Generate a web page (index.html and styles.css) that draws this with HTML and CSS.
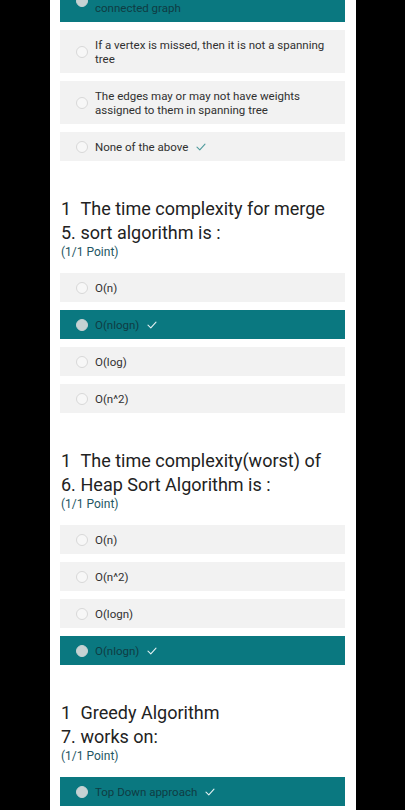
FILE: index.html
```html
<!DOCTYPE html>
<html lang="en">
<head>
<meta charset="utf-8">
<title>Quiz</title>
<link rel="stylesheet" href="styles.css">
</head>
<body>
<main class="panel">
  <section class="options first">
    <div class="opt selected"><span class="radio"></span><span class="label">It is a minimum subgraph of the<br>connected graph</span></div>
    <div class="opt"><span class="radio"></span><span class="label">If a vertex is missed, then it is not a spanning tree</span></div>
    <div class="opt"><span class="radio"></span><span class="label">The edges may or may not have weights assigned to them in spanning tree</span></div>
    <div class="opt"><span class="radio"></span><span class="label">None of the above</span><svg class="check" viewBox="0 0 10 8"><path d="M1 4.2 L3.8 6.8 L9 1.2"/></svg></div>
  </section>

  <section class="question">
    <div class="qhead"><span class="qnum">1<br>5.</span><span class="qtext">The time complexity for merge sort algorithm is :</span></div>
    <div class="points">(1/1 Point)</div>
    <div class="options">
      <div class="opt"><span class="radio"></span><span class="label">O(n)</span></div>
      <div class="opt selected"><span class="radio"></span><span class="label">O(nlogn)</span><svg class="check" viewBox="0 0 10 8"><path d="M1 4.2 L3.8 6.8 L9 1.2"/></svg></div>
      <div class="opt"><span class="radio"></span><span class="label">O(log)</span></div>
      <div class="opt"><span class="radio"></span><span class="label">O(n^2)</span></div>
    </div>
  </section>

  <section class="question">
    <div class="qhead"><span class="qnum">1<br>6.</span><span class="qtext">The time complexity(worst) of Heap Sort Algorithm is :</span></div>
    <div class="points">(1/1 Point)</div>
    <div class="options">
      <div class="opt"><span class="radio"></span><span class="label">O(n)</span></div>
      <div class="opt"><span class="radio"></span><span class="label">O(n^2)</span></div>
      <div class="opt"><span class="radio"></span><span class="label">O(logn)</span></div>
      <div class="opt selected"><span class="radio"></span><span class="label">O(nlogn)</span><svg class="check" viewBox="0 0 10 8"><path d="M1 4.2 L3.8 6.8 L9 1.2"/></svg></div>
    </div>
  </section>

  <section class="question">
    <div class="qhead"><span class="qnum">1<br>7.</span><span class="qtext">Greedy Algorithm<br>works on:</span></div>
    <div class="points">(1/1 Point)</div>
    <div class="options">
      <div class="opt selected"><span class="radio"></span><span class="label">Top Down approach</span><svg class="check" viewBox="0 0 10 8"><path d="M1 4.2 L3.8 6.8 L9 1.2"/></svg></div>
      <div class="opt"><span class="radio"></span><span class="label">Bottom Up approach</span></div>
    </div>
  </section>
</main>
</body>
</html>
```

FILE: styles.css
```css
html, body {
  margin: 0;
  padding: 0;
  height: 810px;
  overflow: hidden;
  background: #000;
}

body {
  font-family: Roboto, "Liberation Sans", Arial, sans-serif;
  color: #333;
}

.panel {
  width: 306px;
  margin-left: 50px;
  height: 810px;
  background: #fff;
  box-sizing: border-box;
  padding: 0 11px 0 10px;
  overflow: hidden;
}

.options {
  display: flex;
  flex-direction: column;
  gap: 8px;
}

.options.first {
  margin-top: -21px;
}

.opt {
  display: flex;
  align-items: center;
  background: #f2f2f2;
  padding: 7.5px 10px 7.5px 16px;
  font-size: 11.5px;
  line-height: 14px;
  color: #303030;
}

.radio {
  flex: none;
  width: 10px;
  height: 10px;
  border: 1px solid #d8d8d8;
  border-radius: 50%;
  background: #f7f7f7;
  margin-right: 7px;
}

.label {
  min-width: 0;
}

.check {
  flex: none;
  width: 10px;
  height: 8px;
  margin-left: 8px;
  fill: none;
  stroke: #4e9a9c;
  stroke-width: 1.1;
  stroke-linecap: round;
  stroke-linejoin: round;
}

.opt.selected {
  background: #0a7880;
  color: #0f3c43;
}

.opt.selected .radio {
  background: #c6d2d3;
  border-color: #c6d2d3;
}

.opt.selected .check {
  stroke: #e4f1f2;
}

.question {
  margin-top: 36px;
}

.qhead {
  display: flex;
  font-size: 18px;
  line-height: 24px;
  color: #222;
}

.qnum {
  flex: none;
  width: 19.5px;
  padding-left: 1px;
}

.qtext {
  min-width: 0;
}

.points {
  font-size: 12px;
  line-height: 15px;
  color: #245562;
  padding-left: 1px;
  margin-bottom: 13px;
}
```
